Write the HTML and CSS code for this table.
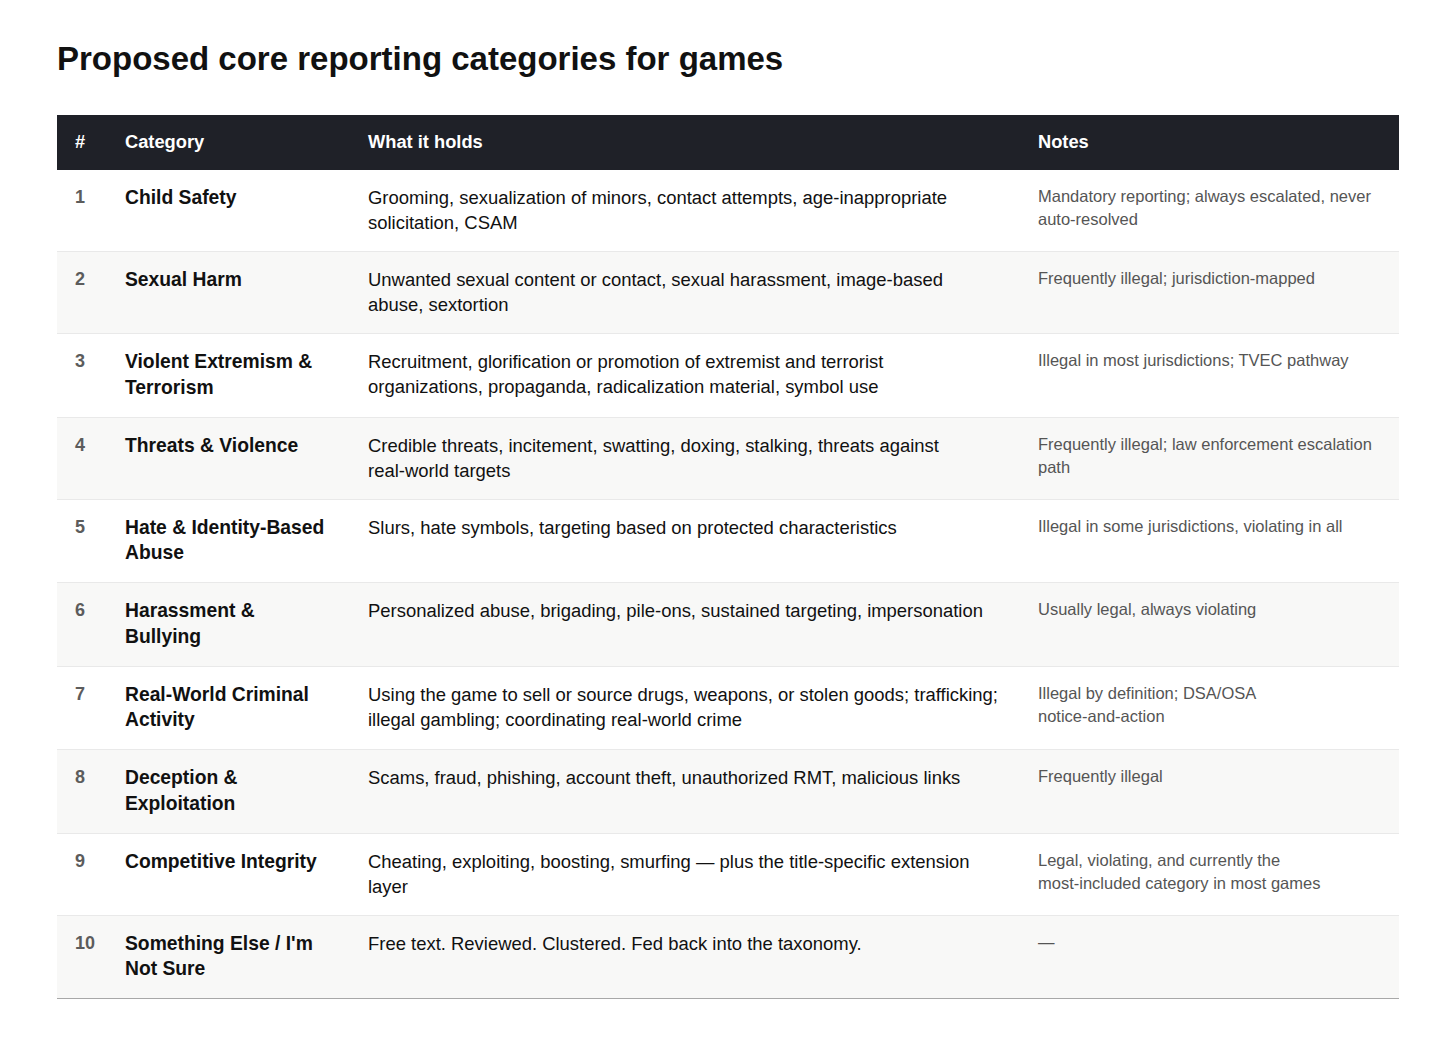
FILE: index.html
```html
<!DOCTYPE html>
<html lang="en">
<head>
<meta charset="utf-8">
<title>Proposed core reporting categories for games</title>
<link rel="stylesheet" href="styles.css">
</head>
<body>
<main class="page">
  <h1 class="title">Proposed core reporting categories for games</h1>
  <table class="cats">
    <colgroup>
      <col class="c-num">
      <col class="c-cat">
      <col class="c-what">
      <col class="c-notes">
    </colgroup>
    <thead>
      <tr>
        <th>#</th>
        <th>Category</th>
        <th>What it holds</th>
        <th>Notes</th>
      </tr>
    </thead>
    <tbody>
      <tr>
        <td class="num">1</td>
        <td class="cat">Child Safety</td>
        <td class="what">Grooming, sexualization of minors, contact attempts, age-inappropriate solicitation, CSAM</td>
        <td class="notes">Mandatory reporting; always escalated, never <span class="nw">auto-resolved</span></td>
      </tr>
      <tr>
        <td class="num">2</td>
        <td class="cat">Sexual Harm</td>
        <td class="what">Unwanted sexual content or contact, sexual harassment, image-based abuse, sextortion</td>
        <td class="notes">Frequently illegal; jurisdiction-mapped</td>
      </tr>
      <tr>
        <td class="num">3</td>
        <td class="cat">Violent Extremism &amp; Terrorism</td>
        <td class="what">Recruitment, glorification or promotion of extremist and terrorist organizations, propaganda, radicalization material, symbol use</td>
        <td class="notes">Illegal in most jurisdictions; TVEC pathway</td>
      </tr>
      <tr>
        <td class="num">4</td>
        <td class="cat">Threats &amp; Violence</td>
        <td class="what">Credible threats, incitement, swatting, doxing, stalking, threats against <span class="nw">real-world</span> targets</td>
        <td class="notes">Frequently illegal; law enforcement escalation path</td>
      </tr>
      <tr>
        <td class="num">5</td>
        <td class="cat">Hate &amp; Identity-Based Abuse</td>
        <td class="what">Slurs, hate symbols, targeting based on protected characteristics</td>
        <td class="notes">Illegal in some jurisdictions, violating in all</td>
      </tr>
      <tr>
        <td class="num">6</td>
        <td class="cat">Harassment &amp; Bullying</td>
        <td class="what">Personalized abuse, brigading, pile-ons, sustained targeting, impersonation</td>
        <td class="notes">Usually legal, always violating</td>
      </tr>
      <tr>
        <td class="num">7</td>
        <td class="cat">Real-World Criminal Activity</td>
        <td class="what">Using the game to sell or source drugs, weapons, or stolen goods; trafficking; illegal gambling; coordinating real-world crime</td>
        <td class="notes">Illegal by definition; DSA/OSA <span class="nw">notice-and-action</span></td>
      </tr>
      <tr>
        <td class="num">8</td>
        <td class="cat">Deception &amp; Exploitation</td>
        <td class="what">Scams, fraud, phishing, account theft, unauthorized RMT, malicious links</td>
        <td class="notes">Frequently illegal</td>
      </tr>
      <tr>
        <td class="num">9</td>
        <td class="cat">Competitive Integrity</td>
        <td class="what">Cheating, exploiting, boosting, smurfing — plus the title-specific extension layer</td>
        <td class="notes">Legal, violating, and currently the <span class="nw">most-included</span> category in most games</td>
      </tr>
      <tr>
        <td class="num">10</td>
        <td class="cat">Something Else / I'm Not Sure</td>
        <td class="what">Free text. Reviewed. Clustered. Fed back into the taxonomy.</td>
        <td class="notes">—</td>
      </tr>
    </tbody>
  </table>
</main>
</body>
</html>
```

FILE: styles.css
```css
html, body {
  margin: 0;
  padding: 0;
  background: #ffffff;
}

body {
  font-family: "Liberation Sans", Arial, sans-serif;
  color: #111111;
}

.page {
  padding: 39px 57px 40px 57px;
}

.title {
  margin: 0 0 36px 0;
  font-size: 33px;
  line-height: 40px;
  font-weight: 700;
  color: #111111;
}

.cats {
  width: 1342px;
  border-collapse: collapse;
  table-layout: fixed;
  border-bottom: 1px solid #a8a8a8;
}

.c-num { width: 50px; }
.c-cat { width: 243px; }
.c-what { width: 670px; }
.c-notes { width: 379px; }

.cats thead tr {
  background: #1f2128;
}

.cats th {
  text-align: left;
  color: #ffffff;
  font-size: 18.3px;
  font-weight: 700;
  line-height: 25px;
  padding: 14px 20px 16px 18px;
}

.cats td {
  vertical-align: top;
  padding: 15px 20px 16px 18px;
  border-top: 1px solid #e9e9e9;
}

.cats tbody tr:first-child td {
  border-top: none;
}

.cats tbody tr:nth-child(even) {
  background: #f8f8f7;
}

.num {
  font-size: 18px;
  line-height: 25px;
  font-weight: 700;
  color: #5c5c5c;
}

.cat {
  font-size: 19.3px;
  line-height: 25.75px;
  font-weight: 700;
  color: #111111;
}

.what {
  font-size: 18.45px;
  line-height: 25px;
  color: #111111;
}

.notes {
  font-size: 16.5px;
  line-height: 23px;
  color: #555555;
}

.nw {
  white-space: nowrap;
}
```
